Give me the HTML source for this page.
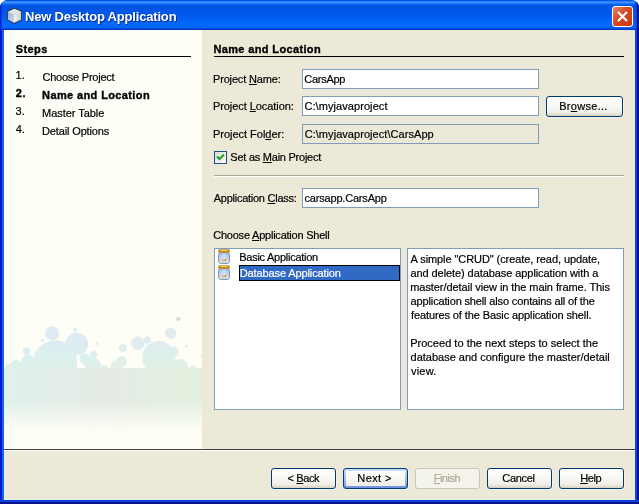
<!DOCTYPE html>
<html><head><meta charset="utf-8">
<style>
html,body{margin:0;padding:0;background:#fff;}
body{width:639px;height:504px;position:relative;overflow:hidden;font-family:"Liberation Sans",sans-serif;font-size:11px;color:#000;letter-spacing:-0.27px;}
.abs{position:absolute;}
#win{position:absolute;left:0;top:0;width:639px;height:504px;background:#0855e6;border-radius:8px 8px 0 0;overflow:hidden;}
#title{position:absolute;left:0;top:0;width:639px;height:30px;background:linear-gradient(to bottom,#0046d6 0px,#0a5ce8 0.8px,#2a80ff 1.5px,#3a92ff 2.5px,#1c74fa 3.6px,#0a60ee 4.6px,#0054e3 6px,#0055e5 9px,#0059ea 14px,#0062f5 20px,#0468fc 23px,#0468fc 27px,#0056e6 28.3px,#0036c8 29.3px,#0032c4 30px);}
#ttext{will-change:transform;position:absolute;left:25px;top:9px;font-size:13px;font-weight:bold;color:#fff;text-shadow:1px 1px 0 #0a2a8a;white-space:nowrap;letter-spacing:-0.18px}
#client{position:absolute;left:4px;top:30px;width:631px;height:470px;background:#ece9d8;}
#left{position:absolute;left:0;top:0;width:198px;height:419px;background:#fefef6;overflow:hidden;}
.t{position:absolute;white-space:nowrap;line-height:13px;-webkit-text-stroke:0.2px;}
.b{font-weight:bold;letter-spacing:0.26px;-webkit-text-stroke:0.35px;}
.hr{position:absolute;height:1px;background:#000;}
.inp{position:absolute;height:18px;border:1px solid #7f9db9;background:#fff;}
.btn{position:absolute;height:20px;border:1px solid #003c74;border-radius:3px;background:linear-gradient(to bottom,#ffffff 0%,#f8f8f4 45%,#f0efe8 80%,#e2dfd2 92%,#d6d0c0 100%);box-shadow:1px 1px 0 rgba(255,255,255,0.45);}
u{text-decoration:underline;}
.def{background:linear-gradient(to bottom,#cee0fd 0%,#b4cdf8 30%,#98b8f0 65%,#6e90de 100%);}
.def i{position:absolute;left:2px;top:2px;right:2px;bottom:2px;background:linear-gradient(to bottom,#ffffff 0%,#f8f8f4 50%,#efeee6 100%);}
.dis{border-color:#c9c7ba;background:#f5f4ea;color:#aca899;box-shadow:none;}
</style></head><body>
<div id="win">
<div id="title"></div>
<div class="abs" style="left:0;top:30px;width:4px;height:474px;background:linear-gradient(to right,#0019cf 0,#0019cf 1.6px,#1464e6 2.2px,#1464e6 4px)"></div>
<div class="abs" style="left:0;top:0;width:3px;height:30px;background:linear-gradient(to right,rgba(0,25,207,0.9) 0,rgba(0,25,207,0.7) 1px,rgba(0,25,207,0) 2.5px)"></div>
<div class="abs" style="left:635px;top:0;width:4px;height:504px;background:linear-gradient(to right,#0a48e8 0,#0a42e4 1.6px,#00138c 2.4px,#00138c 4px)"></div>
<div class="abs" style="left:0;top:500px;width:639px;height:4px;background:linear-gradient(to bottom,#0a44e4 0,#0a3ee0 1.5px,#00138c 2.4px,#00138c 4px)"></div>
<svg class="abs" style="left:6px;top:7px" width="18" height="18" viewBox="0 0 18 18">
<defs><linearGradient id="cl" x1="0" y1="0" x2="1" y2="1"><stop offset="0" stop-color="#9db4d6"/><stop offset="1" stop-color="#ccd8e8"/></linearGradient>
<linearGradient id="cr" x1="0" y1="0" x2="1" y2="0"><stop offset="0" stop-color="#f2f3f3"/><stop offset="1" stop-color="#c6ccd2"/></linearGradient></defs>
<path d="M8.2 1.3 L15.4 4.1 L15.4 12.7 L8.2 16.3 L1.6 12.7 L1.6 4.6 Z" fill="#d6e6e0" stroke="#2c3650" stroke-width="1.3" stroke-linejoin="round"/>
<path d="M1.9 4.9 L8.2 7.4 L8.2 15.8 L1.9 12.4 Z" fill="url(#cl)"/>
<path d="M8.2 7.4 L15.1 4.5 L15.1 12.4 L8.2 15.8 Z" fill="url(#cr)"/>
<path d="M8.2 1.8 L15 4.4 L8.2 7.3 L2 4.8 Z" fill="#d8e8e2"/>
</svg>
<div id="ttext">New Desktop Application</div>
<div class="abs" style="left:612px;top:6px;width:19px;height:19px;border:1px solid #fff;border-radius:3px;background:linear-gradient(135deg,#e8836a 0%,#d84a22 45%,#c83510 100%);"></div>
<svg class="abs" style="left:612px;top:6px" width="21" height="21"><path d="M6 6 L15 15 M15 6 L6 15" stroke="#fff" stroke-width="2.2" stroke-linecap="butt"/></svg>
<div id="client">
 <div id="left">
  <svg class="abs" style="left:0;top:0" width="198" height="419" viewBox="0 0 198 419"><defs>
<linearGradient id="gbh" x1="0" y1="0" x2="1" y2="0"><stop offset="0" stop-color="#e0f1eb"/><stop offset="0.5" stop-color="#e5ebe5"/><stop offset="1" stop-color="#e2f1df"/></linearGradient>
<linearGradient id="gbv" x1="0" y1="0" x2="0" y2="1"><stop offset="0" stop-color="#fdfdf5" stop-opacity="0"/><stop offset="0.5" stop-color="#fdfdf5" stop-opacity="0"/><stop offset="0.95" stop-color="#fdfdf5" stop-opacity="1"/><stop offset="1" stop-color="#fdfdf5" stop-opacity="1"/></linearGradient>
<linearGradient id="cg" gradientUnits="userSpaceOnUse" x1="0" y1="290" x2="0" y2="340"><stop offset="0" stop-color="#e2eaf4"/><stop offset="0.45" stop-color="#deebf2"/><stop offset="0.75" stop-color="#dcf1ee"/><stop offset="1" stop-color="#e1efe9"/></linearGradient>
<linearGradient id="cg2" gradientUnits="userSpaceOnUse" x1="0" y1="290" x2="0" y2="340"><stop offset="0" stop-color="#e2eaf2"/><stop offset="0.45" stop-color="#e0ecef"/><stop offset="0.75" stop-color="#dff1ea"/><stop offset="1" stop-color="#e3efe4"/></linearGradient>
</defs>
<circle cx="48.1" cy="303.3" r="7.1" fill="url(#cg)"/><circle cx="71.0" cy="299.8" r="2.0" fill="url(#cg)"/><circle cx="72.7" cy="314.1" r="11.4" fill="url(#cg)"/><circle cx="38.1" cy="310.2" r="1.5" fill="url(#cg)"/><circle cx="22.7" cy="321.0" r="3.8" fill="url(#cg)"/><circle cx="51.1" cy="332.5" r="22.2" fill="url(#cg)"/><circle cx="92.9" cy="313.5" r="1.6" fill="url(#cg)"/><circle cx="89.7" cy="324.4" r="3.5" fill="url(#cg)"/><circle cx="81.0" cy="329.0" r="5.5" fill="url(#cg)"/><circle cx="89.0" cy="335.5" r="8.0" fill="url(#cg)"/><circle cx="23.8" cy="331.6" r="7.0" fill="url(#cg)"/><circle cx="12.0" cy="335.5" r="5.5" fill="url(#cg)"/><circle cx="4.0" cy="337.0" r="3.0" fill="url(#cg)"/><circle cx="174.3" cy="288.9" r="2.2" fill="#dcdcdc"/><circle cx="166.8" cy="303.3" r="5.7" fill="url(#cg2)"/><circle cx="133.8" cy="313.3" r="6.7" fill="url(#cg2)"/><circle cx="143.5" cy="310.0" r="3.5" fill="url(#cg2)"/><circle cx="119.0" cy="318.1" r="4.1" fill="url(#cg2)"/><circle cx="154.8" cy="327.6" r="16.7" fill="url(#cg2)"/><circle cx="169.4" cy="321.6" r="5.0" fill="url(#cg2)"/><circle cx="182.5" cy="316.3" r="1.5" fill="#d9f0d9"/><circle cx="198.7" cy="326.0" r="2.0" fill="#d9f0d9"/><circle cx="117.5" cy="331.6" r="5.5" fill="url(#cg2)"/><circle cx="112.7" cy="336.3" r="6.3" fill="url(#cg2)"/><circle cx="176.0" cy="337.0" r="8.0" fill="url(#cg2)"/><circle cx="189.0" cy="339.5" r="4.0" fill="url(#cg2)"/>
<circle cx="34" cy="337" r="6" fill="url(#cg)"/><circle cx="16" cy="338" r="5" fill="url(#cg)"/><circle cx="100" cy="339" r="4" fill="url(#cg)"/><circle cx="163" cy="338" r="7" fill="url(#cg2)"/><rect x="0" y="338" width="198" height="66" fill="url(#gbh)"/><rect x="0" y="338" width="198" height="66" fill="url(#gbv)"/></svg>
  <div class="hr" style="left:12px;top:26px;width:175px"></div>
 </div>
 <div class="hr" style="left:210px;top:26px;width:410px"></div>
 <div class="inp" style="left:298px;top:39px;width:235px"></div>
 <div class="inp" style="left:298px;top:66px;width:235px"></div>
 <div class="btn" style="left:542px;top:66px;width:75px;height:19px;line-height:19px"></div>
 <div class="inp" style="left:298px;top:94px;width:235px;background:#ece9d8"></div>
 <div class="abs" style="left:210px;top:121px;width:11px;height:11px;border:1px solid #1c5180;background:linear-gradient(135deg,#dcdcd7,#fff)"></div>
 <svg class="abs" style="left:210px;top:121px" width="13" height="13"><path d="M3 5.5 L5.5 8 L10 3.5" stroke="#21a121" stroke-width="2" fill="none"/></svg>
 <div class="abs" style="left:210px;top:145px;width:410px;height:1px;background:#aca899"></div><div class="abs" style="left:210px;top:146px;width:410px;height:1px;background:#fff"></div>
 <div class="inp" style="left:298px;top:158px;width:235px"></div>
 <div class="abs" style="left:210px;top:218px;width:185px;height:160px;border:1px solid #7f9db9;background:#fff">
   <div class="abs" style="left:24px;top:16px;width:159px;height:14px;border:1px solid #000;background:#316ac5"></div>
 </div>
<svg class="abs" width="0" height="0"><defs><linearGradient id="jg" x1="0" y1="0" x2="0" y2="1"><stop offset="0" stop-color="#a4c4ea"/><stop offset="1" stop-color="#e4eefa"/></linearGradient></defs></svg><svg class="abs" style="left:214px;top:219px" width="12" height="15" viewBox="0 0 12 15">
<rect x="0.7" y="3.7" width="10.6" height="10.6" rx="1.8" fill="url(#jg)" stroke="#6e86a6" stroke-width="1"/>
<rect x="5" y="4.4" width="2.2" height="6" fill="#e4eefa" opacity="0.5"/>
<path d="M1.6 0.2 H10.4 Q12 0.6 12 2 V2.6 Q12 3.7 10.8 3.7 H1.2 Q0 3.7 0 2.6 V2 Q0 0.6 1.6 0.2Z" fill="#c48a18"/>
<rect x="2.2" y="1.2" width="7.4" height="0.9" rx="0.4" fill="#f6e2a8"/>
<ellipse cx="4.4" cy="11.4" rx="1.7" ry="1.3" fill="#ecc096"/>
<ellipse cx="7.3" cy="11.1" rx="1.8" ry="1.3" fill="#e2a468"/>
</svg><svg class="abs" style="left:214px;top:235px" width="12" height="15" viewBox="0 0 12 15">
<rect x="0.7" y="3.7" width="10.6" height="10.6" rx="1.8" fill="url(#jg)" stroke="#6e86a6" stroke-width="1"/>
<rect x="5" y="4.4" width="2.2" height="6" fill="#e4eefa" opacity="0.5"/>
<path d="M1.6 0.2 H10.4 Q12 0.6 12 2 V2.6 Q12 3.7 10.8 3.7 H1.2 Q0 3.7 0 2.6 V2 Q0 0.6 1.6 0.2Z" fill="#c48a18"/>
<rect x="2.2" y="1.2" width="7.4" height="0.9" rx="0.4" fill="#f6e2a8"/>
<ellipse cx="4.4" cy="11.4" rx="1.7" ry="1.3" fill="#ecc096"/>
<ellipse cx="7.3" cy="11.1" rx="1.8" ry="1.3" fill="#e2a468"/>
</svg>
 <div class="abs" style="left:403px;top:218px;width:215px;height:160px;border:1px solid #7f9db9;background:#fff">
 </div>
 <div class="abs" style="left:0;top:419px;width:631px;height:1px;background:#404040"></div><div class="abs" style="left:0;top:420px;width:631px;height:1px;background:#fff"></div>
 <div class="btn" style="left:267px;top:438px;width:63px;height:19px;line-height:19px"></div>
 <div class="btn def" style="left:339px;top:438px;width:63px;height:19px;line-height:19px"><i></i></div>
 <div class="btn dis" style="left:411px;top:438px;width:63px;height:19px;line-height:19px"></div>
 <div class="btn" style="left:483px;top:438px;width:63px;height:19px;line-height:19px"></div>
 <div class="btn" style="left:555px;top:438px;width:63px;height:19px;line-height:19px"></div>
</div>
<div id="tx" style="position:absolute;left:0;top:0;width:639px;height:504px;will-change:transform">
<div class="t b" id="steps" style="left:15.63px;top:43px;letter-spacing:0.422px;">Steps</div>
<div class="t " id="n1" style="left:15.60px;top:69px;letter-spacing:0.132px;">1.</div>
<div class="t " id="s1" style="left:42.44px;top:71px;letter-spacing:-0.233px;">Choose Project</div>
<div class="t b" id="n2" style="left:15.70px;top:87px;letter-spacing:0.716px;">2.</div>
<div class="t b" id="s2" style="left:42.11px;top:89px;letter-spacing:0.378px;">Name and Location</div>
<div class="t " id="n3" style="left:15.42px;top:105px;letter-spacing:0.267px;">3.</div>
<div class="t " id="s3" style="left:42.07px;top:107px;letter-spacing:-0.051px;">Master Table</div>
<div class="t " id="n4" style="left:15.79px;top:123px;letter-spacing:-0.046px;">4.</div>
<div class="t " id="s4" style="left:42.04px;top:125px;letter-spacing:-0.140px;">Detail Options</div>
<div class="t b" id="hd" style="left:213.41px;top:43px;letter-spacing:0.363px;">Name and Location</div>
<div class="t " id="l1" style="left:212.98px;top:73px;letter-spacing:-0.162px;">Project <u>N</u>ame:</div>
<div class="t " id="l2" style="left:212.91px;top:100px;letter-spacing:-0.063px;">Project <u>L</u>ocation:</div>
<div class="t " id="l3" style="left:213.06px;top:128px;letter-spacing:-0.029px;">Project Fol<u>d</u>er:</div>
<div class="t " id="cb" style="left:230.29px;top:151px;letter-spacing:-0.242px;">Set as <u>M</u>ain Project</div>
<div class="t " id="l4" style="left:213.72px;top:192px;letter-spacing:-0.255px;">Application <u>C</u>lass:</div>
<div class="t " id="l5" style="left:213.22px;top:229px;letter-spacing:-0.226px;">Choose <u>A</u>pplication Shell</div>
<div class="t " id="i1" style="left:304.37px;top:73px;letter-spacing:-0.280px;">CarsApp</div>
<div class="t " id="i2" style="left:304.44px;top:100px;letter-spacing:0.074px;">C:\myjavaproject</div>
<div class="t " id="i3" style="left:304.63px;top:128px;letter-spacing:0.058px;">C:\myjavaproject\CarsApp</div>
<div class="t " id="i4" style="left:304.50px;top:192px;letter-spacing:-0.188px;">carsapp.CarsApp</div>
<div class="t " id="li1" style="left:239.23px;top:251px;letter-spacing:-0.260px;">Basic Application</div>
<div class="t " id="li2" style="left:239.80px;top:267px;letter-spacing:-0.117px;color:#fff;">Database Application</div>
<div class="t " id="d0" style="left:410.59px;top:253px;letter-spacing:-0.078px;">A simple "CRUD" (create, read, update,</div>
<div class="t " id="d1" style="left:410.45px;top:267px;letter-spacing:-0.076px;">and delete) database application with a</div>
<div class="t " id="d2" style="left:410.28px;top:281px;letter-spacing:-0.075px;">master/detail view in the main frame. This</div>
<div class="t " id="d3" style="left:410.62px;top:295px;letter-spacing:-0.145px;">application shell also contains all of the</div>
<div class="t " id="d4" style="left:411.01px;top:309px;letter-spacing:-0.106px;">features of the Basic application shell.</div>
<div class="t " id="d6" style="left:410.17px;top:337px;letter-spacing:0.020px;">Proceed to the next steps to select the</div>
<div class="t " id="d7" style="left:410.57px;top:351px;letter-spacing:-0.004px;">database and configure the master/detail</div>
<div class="t " id="d8" style="left:410.96px;top:365px;letter-spacing:0.236px;">view.</div>
<div class="t " id="bb" style="left:287.60px;top:472px;letter-spacing:-0.395px;">&lt; <u>B</u>ack</div>
<div class="t " id="bn" style="left:357.32px;top:472px;letter-spacing:0.413px;">Next &gt;</div>
<div class="t " id="bf" style="left:433.68px;top:472px;letter-spacing:-0.491px;color:#aca899;"><u>F</u>inish</div>
<div class="t " id="bc" style="left:502.33px;top:472px;letter-spacing:-0.307px;">Cancel</div>
<div class="t " id="bh" style="left:580.19px;top:472px;letter-spacing:-0.381px;"><u>H</u>elp</div>
<div class="t " id="br" style="left:559.15px;top:100px;letter-spacing:0.298px;">Br<u>o</u>wse...</div>
</div>
</div>
</body></html>
